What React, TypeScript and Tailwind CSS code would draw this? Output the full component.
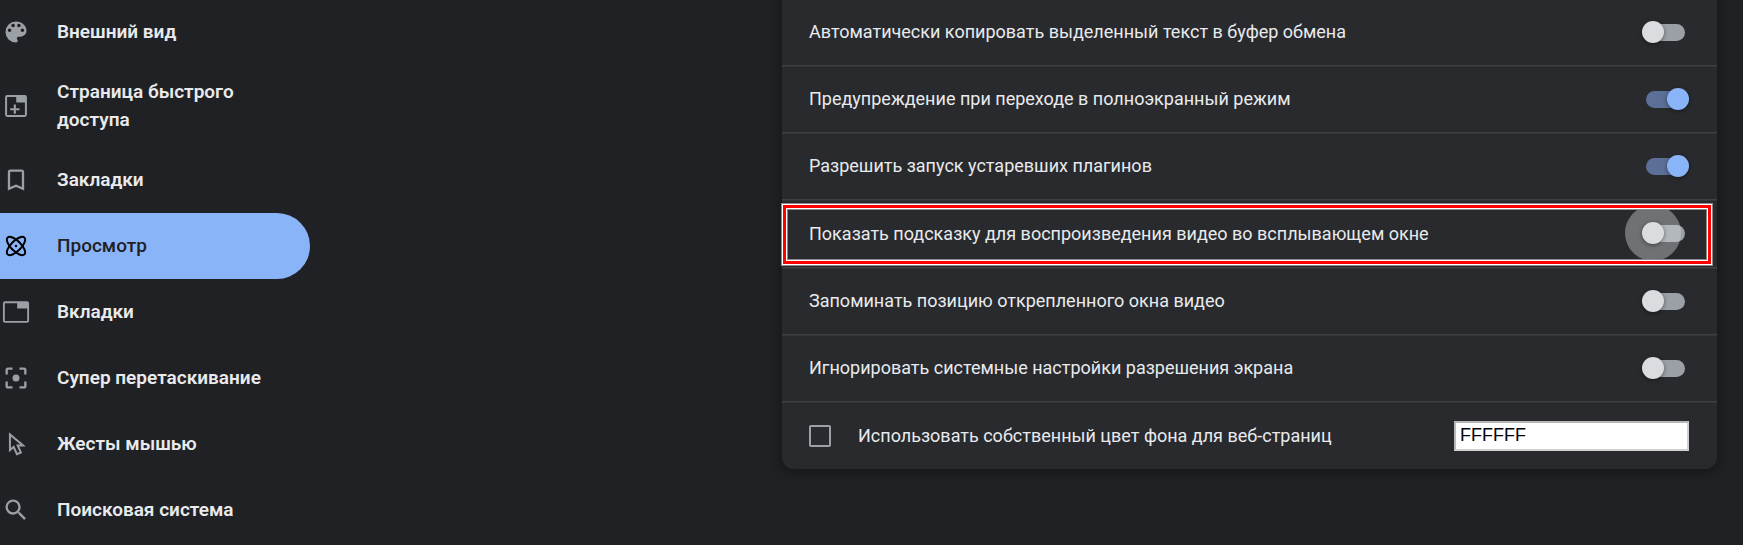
import { useId, useState } from "react";
import type { ReactNode } from "react";
import clsx from "clsx";

function Icon({ children }: { children: ReactNode }) {
  return (
    <svg viewBox="0 0 24 24" className="size-7 shrink-0 fill-current" aria-hidden="true">
      {children}
    </svg>
  );
}

const MENU = [
  {
    label: "Внешний вид",
    icon: (
      <path d="M12 3a9 9 0 0 0 0 18c.83 0 1.5-.67 1.5-1.5 0-.39-.15-.74-.39-1.01-.23-.26-.38-.61-.38-.99 0-.83.67-1.5 1.5-1.5H16c2.76 0 5-2.24 5-5 0-4.42-4.03-8-9-8zm-5.500 9c-.83 0-1.500-.67-1.500-1.500S5.670 9 6.500 9 8 9.670 8 10.500 7.330 12 6.500 12zm3-4C8.670 8 8 7.330 8 6.500S8.670 5 9.500 5s1.500.67 1.500 1.500S10.330 8 9.500 8zm5 0c-.83 0-1.500-.67-1.500-1.500S13.670 5 14.500 5s1.500.67 1.500 1.500S15.330 8 14.500 8zm3 4c-.83 0-1.500-.67-1.500-1.500S16.670 9 17.500 9s1.500.67 1.500 1.500-.67 1.500-1.500 1.500z" />
    ),
  },
  {
    label: "Страница быстрого доступа",
    icon: (
      <>
        <rect x="3.500" y="3.500" width="17" height="17" rx="1" fill="none" stroke="currentColor" strokeWidth="1.700" />
        <path d="M12.200 3.500h8.500v5.500h-8.500zM10.100 10.800h1.800v3.100H15v1.700h-3.100v3.100h-1.800v-3.100H7v-1.700h3.100z" />
      </>
    ),
  },
  {
    label: "Закладки",
    icon: <path d="M17 3H7c-1.100 0-2 .9-2 2v16l7-3 7 3V5c0-1.100-.9-2-2-2zm0 15-5-2.180L7 18V5h10v13z" />,
  },
  {
    label: "Просмотр",
    icon: (
      <g fill="none" stroke="currentColor" strokeWidth="1.700">
        <ellipse cx="12" cy="12" rx="10.200" ry="4.300" transform="rotate(45 12 12)" />
        <ellipse cx="12" cy="12" rx="10.200" ry="4.300" transform="rotate(-45 12 12)" />
        <circle cx="12" cy="12" r="1.100" fill="currentColor" stroke="none" />
      </g>
    ),
  },
  {
    label: "Вкладки",
    icon: (
      <>
        <rect x="1.600" y="3.600" width="20.800" height="16.900" rx="1" fill="none" stroke="currentColor" strokeWidth="1.600" />
        <path d="M13 3.500h9.500v5.500H13z" />
      </>
    ),
  },
  {
    label: "Супер перетаскивание",
    icon: (
      <>
        <path d="M5 15H3v4c0 1.100.9 2 2 2h4v-2H5v-4zM5 5h4V3H5c-1.100 0-2 .9-2 2v4h2V5zm14-2h-4v2h4v4h2V5c0-1.100-.9-2-2-2zm0 16h-4v2h4c1.100 0 2-.9 2-2v-4h-2v4z" />
        <circle cx="12" cy="12" r="3" />
      </>
    ),
  },
  {
    label: "Жесты мышью",
    icon: (
      <path
        d="M6.800 3.800v13.400l3.200-2.700 2.800 6.200 3.400-1.500-2.800-6h4.700z"
        fill="none"
        stroke="currentColor"
        strokeWidth="1.700"
      />
    ),
  },
  {
    label: "Поисковая система",
    icon: (
      <path d="M15.500 14h-.79l-.28-.27A6.470 6.470 0 0 0 16 9.500 6.500 6.500 0 1 0 9.500 16c1.610 0 3.090-.59 4.230-1.570l.27.28v.79l5 4.990L20.490 19l-4.990-5zm-6 0C7.010 14 5 11.990 5 9.500S7.010 5 9.500 5 14 7.010 14 9.500 11.990 14 9.500 14z" />
    ),
  },
];

const SETTINGS = [
  { label: "Автоматически копировать выделенный текст в буфер обмена", on: false },
  { label: "Предупреждение при переходе в полноэкранный режим", on: true },
  { label: "Разрешить запуск устаревших плагинов", on: true },
  { label: "Показать подсказку для воспроизведения видео во всплывающем окне", on: false, highlighted: true },
  { label: "Запоминать позицию открепленного окна видео", on: false },
  { label: "Игнорировать системные настройки разрешения экрана", on: false },
];

const ROW = "relative flex items-center pr-7 pl-[27px] border-t border-[#3f4043] shadow-[inset_0_1px_0_#343538]";

function Toggle({ id, on, ripple, onChange }: { id: string; on: boolean; ripple?: boolean; onChange: () => void }) {
  return (
    <span className="relative mr-1 h-[17px] w-[39px] shrink-0">
      <input
        id={id}
        type="checkbox"
        role="switch"
        checked={on}
        onChange={onChange}
        className={clsx("block size-full cursor-pointer appearance-none rounded-full", on ? "bg-[#5b6f98]" : "bg-[#9aa0a6]")}
      />
      {ripple && (
        <span className="pointer-events-none absolute -top-5 -left-[21px] size-14 rounded-full bg-[#dadce0]/40" />
      )}
      <span
        className={clsx(
          "pointer-events-none absolute -top-[3px] size-[22px] rounded-full shadow-[0_1px_4px_rgba(0,0,0,0.45)]",
          on ? "-right-1 bg-[#8ab4f8]" : "-left-1 bg-[#dadce0]"
        )}
      />
    </span>
  );
}

function SettingRow({ label, on, highlighted }: { label: string; on: boolean; highlighted?: boolean }) {
  const id = useId();
  const [checked, setChecked] = useState(on);

  return (
    <div className={clsx(ROW, highlighted ? "h-[68px]" : "h-[67px]")}>
      <label htmlFor={id} className="flex-1">
        {label}
      </label>
      <Toggle id={id} on={checked} ripple={highlighted} onChange={() => setChecked(!checked)} />
      {/* Red frame with white edges around the row */}
      {highlighted && (
        <span className="pointer-events-none absolute top-[3px] right-1 bottom-px -left-px border border-[#8a8a8a]">
          <span className="block size-full border border-white">
            <span className="block size-full border-3 border-[#ff0000]">
              <span className="block size-full border border-white">
                <span className="block size-full border border-[#8a8a8a]" />
              </span>
            </span>
          </span>
        </span>
      )}
    </div>
  );
}

export default function App() {
  const [color, setColor] = useState("FFFFFF");
  const [ownColor, setOwnColor] = useState(false);

  return (
    <div className="flex min-h-screen items-start justify-between overflow-hidden bg-[#202124] font-['Roboto',sans-serif] text-lg text-[#e8eaed]">
      <nav className="-mt-px w-[310px] shrink-0 text-[19px] leading-7">
        {MENU.map((item) => {
          const active = item.label === "Просмотр";
          return (
            <a
              key={item.label}
              href="#"
              aria-current={active ? "page" : undefined}
              className={clsx(
                "flex min-h-[66px] items-center gap-[27px] rounded-r-full py-[13px] pr-10 pl-0.5",
                active ? "bg-[#8ab4f8] font-medium text-[#202124]" : "font-semibold text-[#e8eaed]"
              )}
            >
              <span className={active ? "text-black" : "text-[#9aa0a6]"}>
                <Icon>{item.icon}</Icon>
              </span>
              <span>{item.label}</span>
            </a>
          );
        })}
      </nav>

      <main className="-mt-0.5 mr-[26px] ml-10 max-w-[935px] flex-1 rounded-b-xl bg-[#292a2d] shadow-[0_2px_8px_3px_rgba(0,0,0,0.25)]">
        {SETTINGS.map((item) => (
          <SettingRow key={item.label} {...item} />
        ))}
        <div className={clsx(ROW, "h-[68px]")}>
          <input
            id="own-color"
            type="checkbox"
            checked={ownColor}
            onChange={() => setOwnColor(!ownColor)}
            className="mr-[27px] size-[22px] shrink-0 appearance-none rounded-xs border-2 border-[#9aa0a6] checked:bg-[#8ab4f8]"
          />
          <label htmlFor="own-color" className="flex-1">
            Использовать собственный цвет фона для веб-страниц
          </label>
          <input
            type="text"
            aria-label="Цвет фона"
            value={color}
            onChange={(e) => setColor(e.target.value)}
            className="h-[30px] w-[235px] border-2 border-t-[#b8b8b8] border-r-[#d0d0d0] border-b-[#d0d0d0] border-l-[#b8b8b8] bg-white px-1 font-['Liberation_Sans',sans-serif] text-lg text-black"
          />
        </div>
      </main>
    </div>
  );
}
